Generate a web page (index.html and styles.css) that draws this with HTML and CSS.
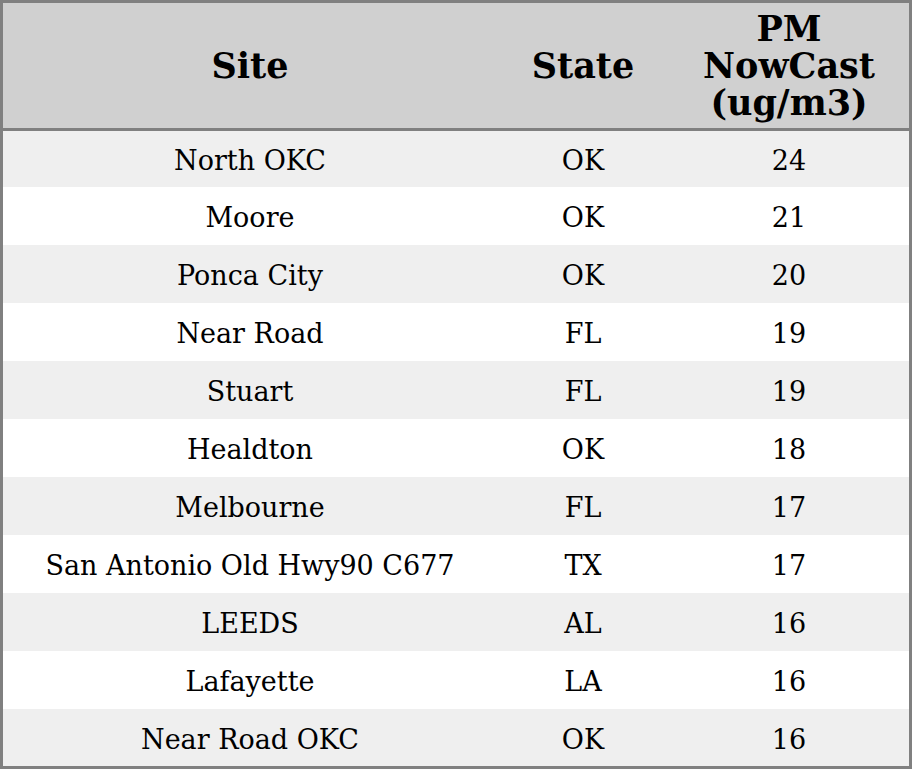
FILE: index.html
```html
<!DOCTYPE html>
<html>
<head>
<meta charset="utf-8">
<link rel="stylesheet" href="styles.css">
</head>
<body>
<table class="aq-table">
  <colgroup>
    <col class="col-site">
    <col class="col-state">
    <col class="col-pm">
  </colgroup>
  <thead>
    <tr>
      <th>Site</th>
      <th>State</th>
      <th>PM NowCast (ug/m3)</th>
    </tr>
  </thead>
  <tbody>
    <tr><td>North OKC</td><td>OK</td><td>24</td></tr>
    <tr><td>Moore</td><td>OK</td><td>21</td></tr>
    <tr><td>Ponca City</td><td>OK</td><td>20</td></tr>
    <tr><td>Near Road</td><td>FL</td><td>19</td></tr>
    <tr><td>Stuart</td><td>FL</td><td>19</td></tr>
    <tr><td>Healdton</td><td>OK</td><td>18</td></tr>
    <tr><td>Melbourne</td><td>FL</td><td>17</td></tr>
    <tr><td>San Antonio Old Hwy90 C677</td><td>TX</td><td>17</td></tr>
    <tr><td>LEEDS</td><td>AL</td><td>16</td></tr>
    <tr><td>Lafayette</td><td>LA</td><td>16</td></tr>
    <tr><td>Near Road OKC</td><td>OK</td><td>16</td></tr>
  </tbody>
</table>
</body>
</html>
```
FILE: styles.css
```css
html, body {
  margin: 0;
  padding: 0;
  background: #ffffff;
}

.aq-table {
  width: 912px;
  height: 769px;
  border: 3px solid #808080;
  border-collapse: separate;
  border-spacing: 0;
  table-layout: fixed;
  font-family: "DejaVu Serif", serif;
  color: #000000;
  box-sizing: border-box;
}

.col-site { width: 494px; }
.col-state { width: 172px; }
.col-pm { width: 240px; }

.aq-table th {
  background: #d0d0d0;
  font-weight: bold;
  font-size: 35px;
  line-height: 37px;
  height: 128px;
  padding: 0 8px;
  box-sizing: border-box;
  text-align: center;
  vertical-align: middle;
  border-bottom: 3px solid #808080;
}

.aq-table td {
  font-size: 27px;
  height: 58px;
  padding: 3px 0 0;
  box-sizing: border-box;
  text-align: center;
  vertical-align: middle;
}

.aq-table tbody tr:first-child td { height: 56px; }
.aq-table tbody tr:last-child td { height: 57px; }

.aq-table tbody tr:nth-child(odd) td { background: #efefef; }
.aq-table tbody tr:nth-child(even) td { background: #ffffff; }
```
